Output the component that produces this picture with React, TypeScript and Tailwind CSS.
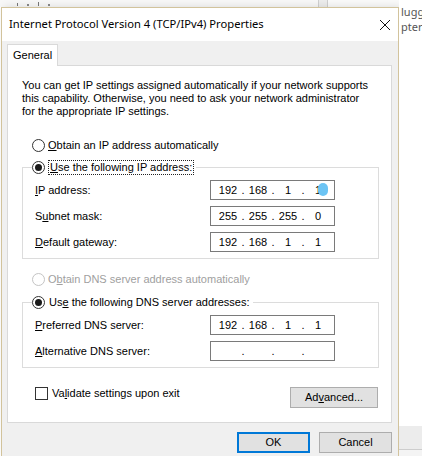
import { Fragment } from 'react';

const ui = "font-['Liberation_Sans',Arial,sans-serif]";

function Radio({ checked, disabled }: { checked?: boolean; disabled?: boolean }) {
  return (
    <span
      className={`flex size-[13px] shrink-0 items-center justify-center rounded-full border bg-white ${
        disabled ? 'border-[#c4c4c4]' : 'border-[#333333]'
      }`}
    >
      {checked && <span className="size-[7px] rounded-full bg-[#1a1a1a]" />}
    </span>
  );
}

function IpBox({ parts, dot }: { parts: string[]; dot?: boolean }) {
  return (
    <div className="relative flex h-[20px] w-[125px] items-center border border-[#7a7a7a] bg-white pl-[5px]">
      {parts.map((p, i) => (
        <Fragment key={i}>
          {i > 0 && <span className="w-[6px] text-center">.</span>}
          <span className="w-[24px] text-center">{p}</span>
        </Fragment>
      ))}
      {dot && <span className="absolute left-[107px] top-[2px] h-[13px] w-[10px] rounded-full bg-[#6cc4f4]" />}
    </div>
  );
}

function Field({ label, u, rest, parts, dot }: { label?: string; u: string; rest: string; parts: string[]; dot?: boolean }) {
  return (
    <div className="flex h-[20px] items-center justify-between pl-[12px] pr-[43px]">
      <span>
        {label}
        <span className="underline underline-offset-[1px]">{u}</span>
        {rest}
      </span>
      <IpBox parts={parts} dot={dot} />
    </div>
  );
}

function GroupBox({ header, children }: { header: React.ReactNode; children: React.ReactNode }) {
  return (
    <div className="border border-[#dcdcdc]">
      <div className="-mt-[9px] flex h-[16px] pl-[9px]">
        <div className="flex items-center gap-[3px] bg-white pr-[2px]">{header}</div>
      </div>
      <div className="flex flex-col gap-[6px] pb-[6px] pt-[5px]">{children}</div>
    </div>
  );
}

function Button({ children, focus }: { children: React.ReactNode; focus?: boolean }) {
  return (
    <div
      className={`flex h-[21px] w-[73px] items-center justify-center bg-[#e1e1e1] ${
        focus ? 'border-2 border-[#0078d7]' : 'border border-[#adadad]'
      }`}
    >
      {children}
    </div>
  );
}

export default function App() {
  return (
    <div className={`flex h-[456px] w-[422px] overflow-hidden bg-white text-[11px] text-black ${ui}`}>
      <div className="flex w-[399px] shrink-0 flex-col">
        {/* window behind, top edge */}
        <div className="flex h-[7px] overflow-hidden bg-[#f7f7f7]">
          <div className="flex w-[318px] items-end gap-[9px] pb-[1px] pl-[17px]">
            <span className="h-[3px] w-[1px] bg-[#777]" />
            <span className="h-[2px] w-[2px] bg-[#888]" />
            <span className="h-[4px] w-[1px] bg-[#777]" />
            <span className="h-[2px] w-[2px] bg-[#888]" />
          </div>
          <div className="w-[10px] border-x border-[#cfcfcf] bg-[#ececec]" />
          <div className="flex-1 bg-[#f9f9f9]" />
        </div>

        {/* dialog */}
        <div className="ml-[1px] flex flex-1 flex-col border border-b-0 border-[#d2c39c] bg-[#f0f0f0] shadow-[3px_0_8px_rgba(0,0,0,0.12)]">
          <div className="flex h-[33px] items-center justify-between bg-white pl-[7px] pr-[6px] font-['Noto_Sans',sans-serif] text-[11.2px]">
            <span>Internet Protocol Version 4 (TCP/IPv4) Properties</span>
            <svg width="12" height="12" viewBox="0 0 12 12" className="mr-[1px]">
              <path d="M1 1 L11 11 M11 1 L1 11" stroke="#111" strokeWidth="1" />
            </svg>
          </div>

          <div className="flex flex-col pl-[5px] pr-[6px] pt-[3px]">
            <div className="relative z-10 -mb-px flex h-[22px] w-[51px] items-center border border-b-0 border-[#d9d9d9] bg-white pl-[5px]">
              General
            </div>
            <div className="flex h-[358px] flex-col border border-[#d9d9d9] bg-white pl-[14px] pr-[12px] pt-[13px]">
              <p className="leading-[13px]">
                You can get IP settings assigned automatically if your network supports
                <br />
                this capability. Otherwise, you need to ask your network administrator
                <br />
                for the appropriate IP settings.
              </p>

              <div className="mt-[19px] flex h-[16px] items-center gap-[3px] pl-[10px]">
                <Radio />
                <span>
                  <span className="underline underline-offset-[1px]">O</span>btain an IP address automatically
                </span>
              </div>

              <div className="mt-[14px]">
                <GroupBox
                  header={
                    <>
                      <Radio checked />
                      <span className="border border-dotted border-[#222] px-px leading-[13px]">
                        <span className="underline underline-offset-[1px]">U</span>se the following IP address:
                      </span>
                    </>
                  }
                >
                  <Field u="I" rest="P address:" parts={['192', '168', '1', '1']} dot />
                  <Field label="S" u="u" rest="bnet mask:" parts={['255', '255', '255', '0']} />
                  <Field u="D" rest="efault gateway:" parts={['192', '168', '1', '1']} />
                </GroupBox>
              </div>

              <div className="mt-[12px] flex h-[16px] items-center gap-[3px] pl-[10px] text-[#a0a0a0]">
                <Radio disabled />
                <span>
                  O<span className="underline underline-offset-[1px]">b</span>tain DNS server address automatically
                </span>
              </div>

              <div className="mt-[15px]">
                <GroupBox
                  header={
                    <>
                      <Radio checked />
                      <span className="px-px">
                        Us<span className="underline underline-offset-[1px]">e</span> the following DNS server addresses:
                      </span>
                    </>
                  }
                >
                  <Field u="P" rest="referred DNS server:" parts={['192', '168', '1', '1']} />
                  <Field u="A" rest="lternative DNS server:" parts={['', '', '', '']} />
                </GroupBox>
              </div>

              <div className="mt-[19px] flex items-start justify-between pl-[13px] pr-px">
                <div className="flex h-[13px] items-center gap-[4px]">
                  <span className="size-[13px] border border-[#333] bg-white" />
                  <span>
                    Va<span className="underline underline-offset-[1px]">l</span>idate settings upon exit
                  </span>
                </div>
                <div className="flex h-[21px] w-[88px] items-center justify-center border border-[#adadad] bg-[#e1e1e1]">
                  <span>
                    Ad<span className="underline underline-offset-[1px]">v</span>anced...
                  </span>
                </div>
              </div>
            </div>

            <div className="flex justify-end gap-[9px] pt-[9px]">
              <Button focus>OK</Button>
              <Button>Cancel</Button>
            </div>
          </div>
        </div>
      </div>

      {/* window behind, right */}
      <div className="flex flex-1 flex-col overflow-hidden bg-white pl-[2px] font-['Noto_Sans',sans-serif] text-[11px] leading-[15px] text-[#555]">
        <div className="mt-[4px]">lugg</div>
        <div>pter</div>
        <div className="-ml-[2px] mt-[392px] h-[24px] border-b border-[#cdcdcd] bg-[#ececec]" />
        <div className="-ml-[2px] flex-1 bg-[#f4f4f4]" />
      </div>
    </div>
  );
}
